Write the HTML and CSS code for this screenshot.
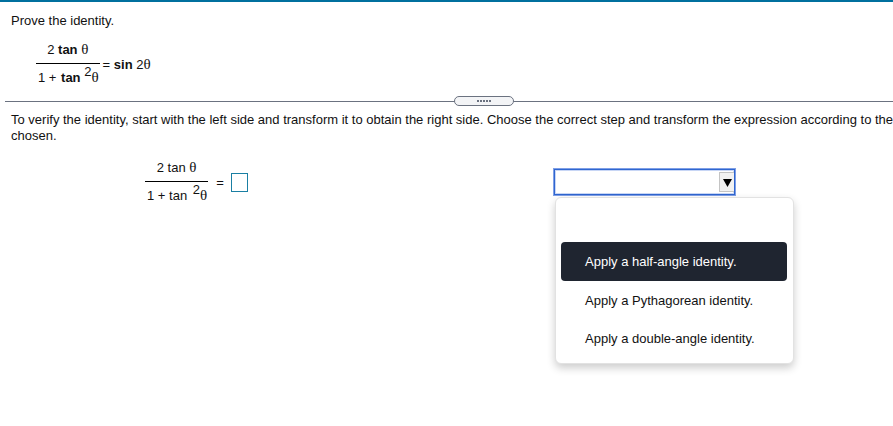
FILE: index.html
```html
<!DOCTYPE html>
<html lang="en">
<head>
    <meta charset="UTF-8">
    <meta name="viewport" content="width=device-width, initial-scale=1.0">
    <title>Prove the identity</title>
    <link rel="stylesheet" href="styles.css">
</head>
<body>
    <div class="top-bar"></div>
    <section class="prompt">
        <p class="text">Prove the identity.</p>
        <div class="equation given">
            <div class="fraction">
                <div class="numerator">2 <b>tan</b> <span class="theta">θ</span></div>
                <div class="denominator">1 + <b class="fn-gap">tan</b> <sup>2</sup><span class="theta">θ</span></div>
            </div>
            <span class="rhs">= <b>sin</b> 2<span class="theta">θ</span></span>
        </div>
    </section>
    <div class="divider">
        <div class="handle">
            <span class="dot"></span><span class="dot"></span><span class="dot"></span><span class="dot"></span><span class="dot"></span>
        </div>
    </div>
    <section class="work">
        <p class="text instructions">To verify the identity, start with the left side and transform it to obtain the right side. Choose the correct step and transform the expression according to the chosen.</p>
        <div class="step">
            <div class="equation answer">
                <div class="fraction">
                    <div class="numerator">2 tan <span class="theta">θ</span></div>
                    <div class="denominator">1 + tan <sup>2</sup><span class="theta">θ</span></div>
                </div>
                <span class="equals">=</span>
                <span class="answer-box"></span>
            </div>
            <div class="select-wrap">
                <div class="select">
                    <span class="select-arrow">
                        <svg width="9" height="9" viewBox="0 0 10 10"><polygon points="0,1 10,1 5,10" fill="#000"/></svg>
                    </span>
                </div>
                <ul class="menu">
                    <li class="menu-item selected">Apply a half-angle identity.</li>
                    <li class="menu-item">Apply a Pythagorean identity.</li>
                    <li class="menu-item">Apply a double-angle identity.</li>
                </ul>
            </div>
        </div>
    </section>
</body>
</html>
```

FILE: styles.css
```css
html, body {
    height: 100%;
}
body {
    margin: 0;
    background-color: white;
    color: #111;
    font-family: "Liberation Sans", Arial, sans-serif;
    font-size: 13px;
    overflow: hidden;
}
.top-bar {
    height: 2px;
    background-color: #00709e;
}
.text {
    margin: 0;
    line-height: 16px;
}
.prompt {
    height: 99px;
    padding: 11px 0 0 11px;
    box-sizing: border-box;
}
.equation {
    display: flex;
    align-items: center;
}
.given {
    margin: 13px 0 0 25px;
}
.fraction {
    display: flex;
    flex-direction: column;
    align-items: center;
}
.numerator {
    padding-bottom: 5px;
    line-height: 16px;
    border-bottom: 1px solid #000;
    align-self: stretch;
    text-align: center;
}
.denominator {
    padding: 6px 1px 0 2px;
    line-height: 16px;
    white-space: nowrap;
}
.fn-gap {
    margin-left: 1px;
}
.denominator sup {
    font-size: 13px;
    line-height: 0;
    vertical-align: 6px;
}
.answer .denominator sup {
    margin-left: 2px;
}
.theta {
    font-family: "Liberation Serif", serif;
    font-size: 15px;
    line-height: 0;
}
.rhs {
    margin-left: 3px;
}
.divider {
    position: relative;
    height: 1px;
    margin-left: 5px;
    background-color: #6b7280;
}
.handle {
    position: absolute;
    left: 449px;
    top: -5px;
    width: 58px;
    height: 8px;
    display: flex;
    justify-content: center;
    align-items: center;
    gap: 1px;
    background-color: #f3f4f6;
    border: 1px solid #6b7280;
    border-radius: 5px;
}
.dot {
    width: 2px;
    height: 2px;
    background-color: #6b7280;
}
.work {
    padding: 10px 0 0 11px;
}
.instructions {
    width: 890px;
}
.step {
    display: flex;
    margin-top: 16px;
}
.answer {
    margin-left: 134px;
    width: 409px;
    align-self: flex-start;
}
.equals {
    margin-left: 8px;
}
.answer-box {
    width: 15px;
    height: 17px;
    margin-left: 7px;
    border: 1px solid #1a7fa3;
}
.select-wrap {
    position: relative;
}
.select {
    width: 179px;
    height: 24px;
    margin-top: 9px;
    display: flex;
    justify-content: flex-end;
    align-items: center;
    border: 1px solid #2f66d0;
    box-shadow: 0 0 0 1px #7f9fe6, inset 0 0 0 1px #c8d6f5;
}
.select-arrow {
    width: 14px;
    height: 18px;
    display: flex;
    justify-content: center;
    align-items: center;
    background-color: #f2f2f2;
    border: 1px solid #c4c4c4;
    border-right: none;
}
.menu {
    position: absolute;
    left: 1px;
    top: 37px;
    width: 239px;
    height: 167px;
    margin: 0;
    padding: 44px 6px 0 5px;
    box-sizing: border-box;
    list-style: none;
    background-color: white;
    border: 1px solid #e2e2e2;
    border-radius: 6px;
    box-shadow: 0 4px 8px rgba(0, 0, 0, 0.2);
}
.menu-item {
    height: 38px;
    box-sizing: border-box;
    padding: 1px 0 0 24px;
    line-height: 38px;
    border-radius: 4px;
}
.menu-item.selected {
    height: 39px;
    padding-top: 0;
    line-height: 39px;
    color: white;
    background-color: #1f2530;
}
```
